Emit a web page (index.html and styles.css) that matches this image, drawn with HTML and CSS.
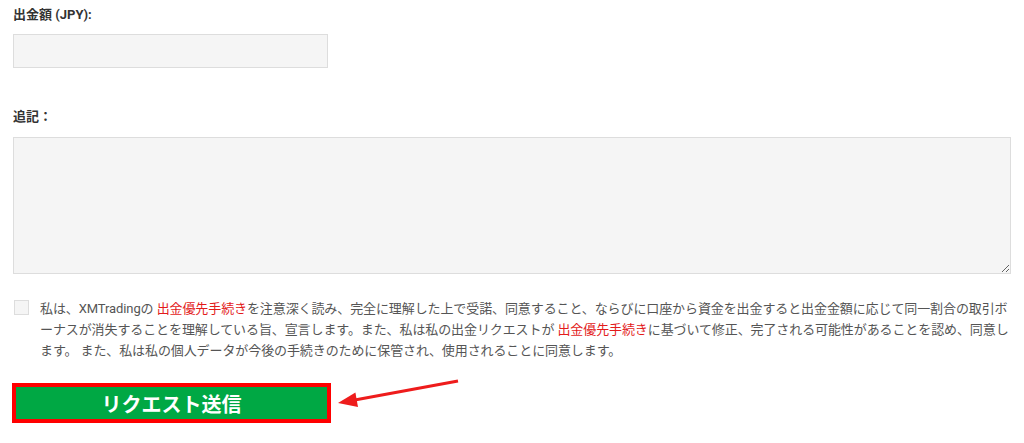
FILE: index.html
```html
<!DOCTYPE html>
<html lang="ja">
  <head>
    <meta charset="UTF-8" />
    <meta name="viewport" content="width=device-width, initial-scale=1.0" />
    <title>出金リクエスト</title>
    <link rel="stylesheet" href="styles.css">
  </head>
  <body>
    <form class="withdraw_form">
      <div class="field">
        <label class="field_label" for="amount">出金額 (JPY):</label>
        <input id="amount" class="text_input" type="text" />
      </div>
      <div class="field field_note">
        <label class="field_label" for="note">追記：</label>
        <textarea id="note" class="note_input"></textarea>
      </div>
      <div class="agree_row">
        <span class="check_box"></span>
        <p class="agree_text">私は、XMTradingの <a class="red_link" href="#">出金優先手続き</a>を注意深く読み、完全に理解した上で受諾、同意すること、ならびに口座から資金を出金すると出金金額に応じて同一割合の取引ボーナスが消失することを理解している旨、宣言します。また、私は私の出金リクエストが <a class="red_link" href="#">出金優先手続き</a>に基づいて修正、完了される可能性があることを認め、同意します。 また、私は私の個人データが今後の手続きのために保管され、使用されることに同意します。</p>
      </div>
      <div class="submit_row">
        <button class="submit_btn" type="button">リクエスト送信</button>
        <!-- 注釈の矢印 -->
        <svg class="arrow" width="134" height="36" viewBox="0 0 134 36">
          <line x1="130" y1="2" x2="24" y2="21.5" stroke="#ee1c1c" stroke-width="3" />
          <polygon points="10,24 27.4,13.5 30,28" fill="#ee1c1c" />
        </svg>
      </div>
    </form>
  </body>
</html>
```

FILE: styles.css
```css
body {
  margin: 0;
  background-color: #ffffff;
  font-family: Roboto, "Noto Sans CJK JP", sans-serif;
  color: #555555;
}

.withdraw_form {
  padding: 6px 13px 0 13px;
}

.field {
  display: flex;
  flex-direction: column;
  align-items: flex-start;
}

.field_label {
  font-size: 13px;
  font-weight: bold;
  line-height: 18px;
  color: #333333;
  margin-bottom: 10px;
}

.text_input {
  box-sizing: border-box;
  width: 315px;
  height: 34px;
  margin: 0;
  border: 1px solid #dddddd;
  background-color: #f5f5f5;
}

.field_note {
  margin-top: 40px;
}

.field_note .field_label {
  margin-bottom: 11px;
}

.note_input {
  box-sizing: border-box;
  width: 998px;
  height: 137px;
  margin: 0;
  border: 1px solid #dddddd;
  background-color: #f5f5f5;
  resize: vertical;
}

.agree_row {
  display: flex;
  align-items: flex-start;
  margin-top: 24px;
}

.check_box {
  flex: none;
  box-sizing: border-box;
  width: 15px;
  height: 15px;
  margin: 2px 12px 0 1px;
  border: 1px solid #dddddd;
  background-color: #f5f5f5;
}

.agree_text {
  margin: 0 0 0 -1px;
  width: 972px;
  font-size: 13px;
  line-height: 21px;
  letter-spacing: -0.1px;
}

.red_link {
  color: #e31b1b;
  text-decoration: none;
}

.submit_row {
  position: relative;
  margin-top: 22px;
  margin-left: -1px;
}

.submit_btn {
  box-sizing: border-box;
  width: 319px;
  height: 40px;
  margin: 0;
  border: 4px solid #ff0000;
  background-color: #00a844;
  color: #ffffff;
  font-family: Roboto, "Noto Sans CJK JP", sans-serif;
  font-size: 20px;
  font-weight: bold;
  cursor: pointer;
}

.arrow {
  position: absolute;
  left: 316px;
  top: -4px;
}
```
